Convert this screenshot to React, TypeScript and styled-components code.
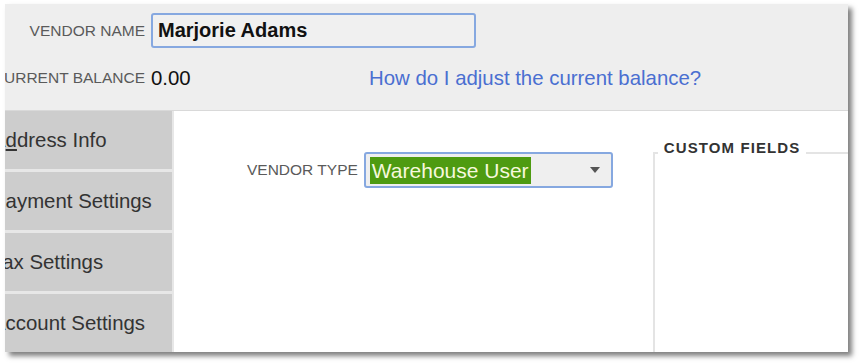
import styled, { createGlobalStyle } from 'styled-components';

const App = () => {
  return (
    <>
      <GlobalStyle />
      <Page>
        <Window>
          <Inner>
            <Header>
              <FieldLabel>Vendor Name</FieldLabel>
              <NameBox>Marjorie Adams</NameBox>
              <FieldLabel>Current Balance</FieldLabel>
              <BalanceValue>0.00</BalanceValue>
              <HelpLink href="#">How do I adjust the current balance?</HelpLink>
            </Header>
            <Body>
              <Sidebar>
                <Tab>A<Mnemonic>d</Mnemonic>dress Info</Tab>
                <Tab>Payment Settings</Tab>
                <Tab>Tax Settings</Tab>
                <Tab>Account Settin<Mnemonic>g</Mnemonic>s</Tab>
              </Sidebar>
              <Content>
                <TypeRow>
                  <FieldLabel>Vendor Type</FieldLabel>
                  <SelectBox>
                    <Selected>Warehouse User</Selected>
                    <svg width="10" height="6" viewBox="0 0 10 6">
                      <path d="M0 0 L10 0 L5 6 Z" fill="#555" />
                    </svg>
                  </SelectBox>
                </TypeRow>
                <CustomFields>
                  <Legend>Custom Fields</Legend>
                </CustomFields>
              </Content>
            </Body>
          </Inner>
        </Window>
      </Page>
    </>
  );
};

// styles
const GlobalStyle = createGlobalStyle`
  html, body {
    margin: 0;
    padding: 0;
    background: #fff;
  }
  body {
    font-family: "Liberation Sans", Arial, sans-serif;
  }
`;

const Page = styled.div`
  width: 860px;
  height: 364px;
  padding: 4px 0 0 5px;
  box-sizing: border-box;
`;

const Window = styled.div`
  width: 843px;
  height: 348px;
  overflow: hidden;
  background: #fff;
  box-shadow: 4px 4px 5px rgba(0, 0, 0, 0.5);
`;

// the screenshot crops the dialog on the left, so the content starts off-screen
const Inner = styled.div`
  margin-left: -20px;
  width: calc(100% + 20px);
  height: 100%;
  display: flex;
  flex-direction: column;
`;

const Header = styled.div`
  flex: none;
  height: 107px;
  box-sizing: border-box;
  background: #eeeeee;
  border-bottom: 1px solid #d9d9d9;
  padding-top: 9px;
  display: grid;
  grid-template-columns: 160px 212px 1fr;
  grid-template-rows: 35px 24px;
  column-gap: 6px;
  row-gap: 18px;
  align-items: center;
  align-content: start;
`;

const FieldLabel = styled.div`
  font-size: 15.5px;
  color: #5a5a5a;
  text-transform: uppercase;
  text-align: right;
  white-space: nowrap;
`;

const NameBox = styled.div`
  grid-column: 2 / 4;
  width: 325px;
  height: 35px;
  box-sizing: border-box;
  border: 2px solid #86a8e0;
  border-radius: 3px;
  background: #f0f0f0;
  padding: 0 5px;
  display: flex;
  align-items: center;
  font-size: 20px;
  font-weight: 700;
  color: #111;
`;

const BalanceValue = styled.div`
  font-size: 20.4px;
  color: #111;
`;

const HelpLink = styled.a`
  font-size: 20.4px;
  color: #4a6fd1;
  text-decoration: none;
  white-space: nowrap;
`;

const Body = styled.div`
  flex: 1;
  min-height: 0;
  display: flex;
`;

const Sidebar = styled.div`
  flex: none;
  width: 187px;
  background: #e7e7e7;
  border-right: 2px solid #e7e7e7;
  display: flex;
  flex-direction: column;
  gap: 3px;
`;

const Tab = styled.div`
  flex: none;
  height: 58px;
  background: #cdcdcd;
  padding-left: 7px;
  display: flex;
  align-items: center;
  font-size: 20.4px;
  color: #333;
  white-space: nowrap;
`;

const Mnemonic = styled.span`
  text-decoration: underline;
  text-underline-offset: 2px;
`;

const Content = styled.div`
  flex: 1;
  background: #fff;
  display: flex;
  align-items: flex-start;
  padding-left: 73px;
`;

const TypeRow = styled.div`
  display: flex;
  align-items: center;
  gap: 6px;
  margin-top: 41px;
`;

const SelectBox = styled.div`
  width: 249px;
  height: 36px;
  box-sizing: border-box;
  border: 2px solid #86a8e0;
  border-radius: 3px;
  background: #efefef;
  padding: 0 11px 0 4px;
  display: flex;
  align-items: center;
  justify-content: space-between;
`;

const Selected = styled.span`
  background: #4e9b11;
  color: #f6f8dc;
  font-size: 21px;
  height: 27px;
  line-height: 27px;
  padding: 0 2px;
`;

const CustomFields = styled.fieldset`
  flex: none;
  margin: 29px 0 0 40px;
  padding: 0;
  width: 240px;
  height: 260px;
  border: 2px solid #e4e4e4;
  border-right: none;
  border-bottom: none;
`;

const Legend = styled.legend`
  margin-left: 3px;
  padding: 0 6px 10px;
  font-size: 15px;
  line-height: 15px;
  font-weight: 700;
  letter-spacing: 1.1px;
  color: #333;
  text-transform: uppercase;
`;

export default App;
